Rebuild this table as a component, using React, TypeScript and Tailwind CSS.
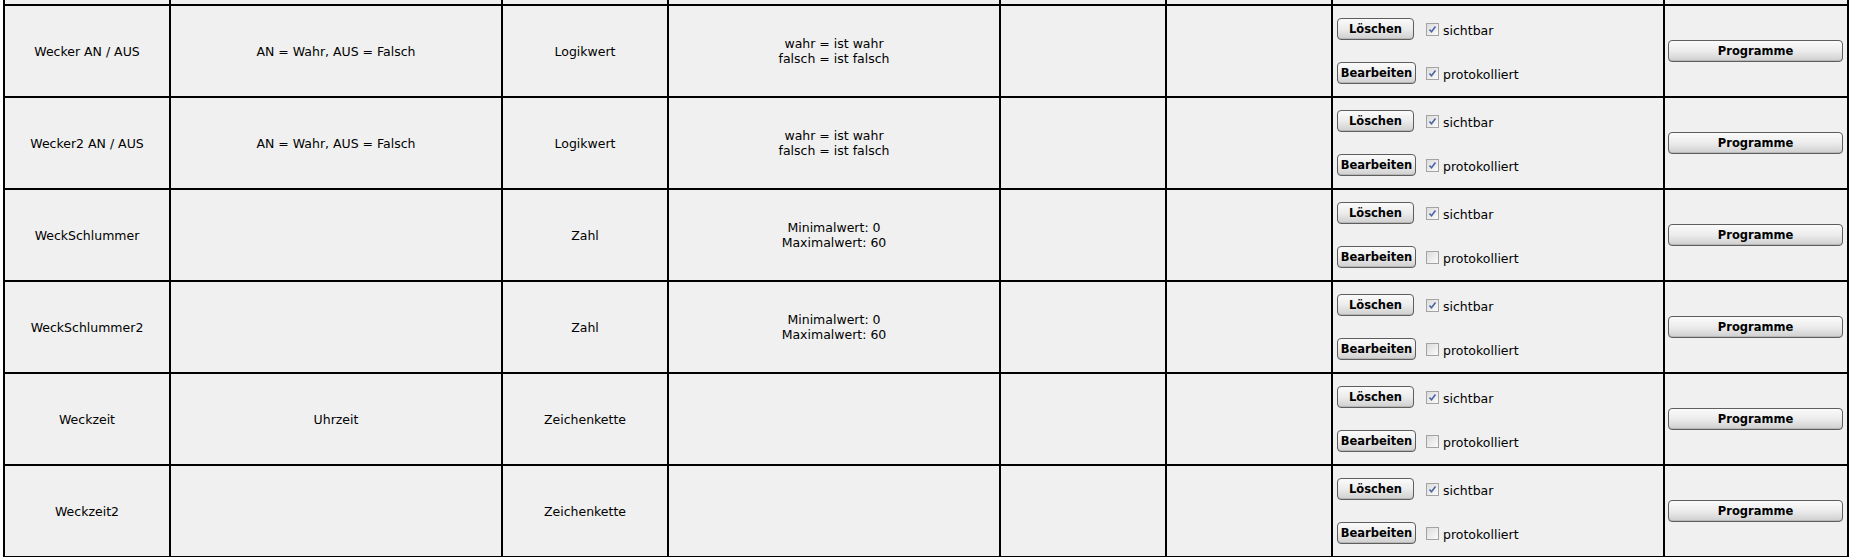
import React from "react";

type Row = {
  name: string;
  desc: string;
  type: string;
  values: string[];
  visible: boolean;
  logged: boolean;
};

const rows: Row[] = [
  { name: "Wecker AN / AUS", desc: "AN = Wahr, AUS = Falsch", type: "Logikwert", values: ["wahr = ist wahr", "falsch = ist falsch"], visible: true, logged: true },
  { name: "Wecker2 AN / AUS", desc: "AN = Wahr, AUS = Falsch", type: "Logikwert", values: ["wahr = ist wahr", "falsch = ist falsch"], visible: true, logged: true },
  { name: "WeckSchlummer", desc: "", type: "Zahl", values: ["Minimalwert: 0", "Maximalwert: 60"], visible: true, logged: false },
  { name: "WeckSchlummer2", desc: "", type: "Zahl", values: ["Minimalwert: 0", "Maximalwert: 60"], visible: true, logged: false },
  { name: "Weckzeit", desc: "Uhrzeit", type: "Zeichenkette", values: [], visible: true, logged: false },
  { name: "Weckzeit2", desc: "", type: "Zeichenkette", values: [], visible: true, logged: false },
];

function Check({ checked }: { checked: boolean }) {
  return (
    <span className="inline-flex h-[13px] w-[13px] shrink-0 items-center justify-center border border-[#a3a3a3] bg-linear-to-br from-[#dcdcdc] to-[#fbfbfb]">
      {checked && (
        <svg width="9" height="9" viewBox="0 0 9 9">
          <path d="M1.5 4.5 L3.5 6.8 L7.5 1.5" fill="none" stroke="#4d63a8" strokeWidth="1.6" />
        </svg>
      )}
    </span>
  );
}

function Btn({ children, className }: { children: React.ReactNode; className: string }) {
  return (
    <button
      type="button"
      className={
        "flex h-[22px] items-center justify-center rounded-[4px] border border-[#5e5e5e] bg-linear-to-b from-[#fbfbfb] via-[#ececec] to-[#cfcfcf] text-[11.5px] font-bold text-black shadow-[inset_0_-1px_0_#b8b8b8] " +
        className
      }
    >
      {children}
    </button>
  );
}

const cell = "flex items-center justify-center bg-[#f0f0f0] text-center";

export default function App() {
  return (
    <div
      className="h-[557px] w-[1869px] overflow-hidden bg-white text-[12.5px] leading-[15px] text-black"
      style={{ fontFamily: '"DejaVu Sans", Verdana, sans-serif' }}
    >
      <div className="ml-[3px] grid w-[1846px] grid-cols-[164px_330px_164px_330px_164px_164px_330px_182px] grid-rows-[4px_90px_90px_90px_90px_90px_90px] gap-[2px] bg-black px-[2px] pb-[2px]">
        {Array.from({ length: 8 }).map((_, i) => (
          <div key={"stub" + i} className="bg-[#f0f0f0]" />
        ))}
        {rows.map((r) => (
          <React.Fragment key={r.name}>
            <div className={cell}>{r.name}</div>
            <div className={cell}>{r.desc}</div>
            <div className={cell}>{r.type}</div>
            <div className={cell + " flex-col"}>
              {r.values.map((v) => (
                <div key={v}>{v}</div>
              ))}
            </div>
            <div className={cell} />
            <div className={cell} />
            <div className="flex items-center bg-[#f0f0f0] pl-[4px]">
              <div className="grid grid-cols-[auto_auto] items-center gap-x-[10px] gap-y-[22px]">
                <Btn className="w-[77px]">Löschen</Btn>
                <div className="flex items-center gap-[4px]">
                  <Check checked={r.visible} />
                  <span className="pt-[2px]">sichtbar</span>
                </div>
                <Btn className="w-[79px]">Bearbeiten</Btn>
                <div className="flex items-center gap-[4px]">
                  <Check checked={r.logged} />
                  <span className="pt-[2px]">protokolliert</span>
                </div>
              </div>
            </div>
            <div className="flex items-center bg-[#f0f0f0] pl-[3px] pr-[4px]">
              <Btn className="w-full">Programme</Btn>
            </div>
          </React.Fragment>
        ))}
      </div>
    </div>
  );
}
